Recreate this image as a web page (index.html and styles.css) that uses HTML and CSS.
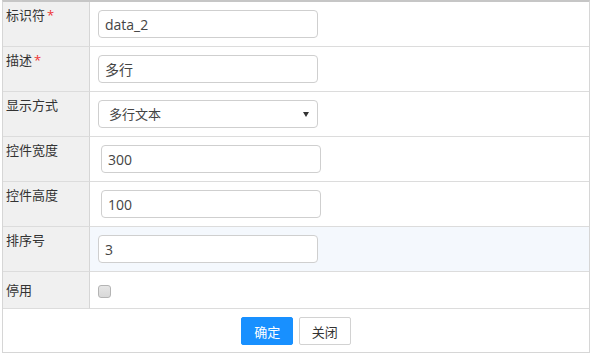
FILE: index.html
```html
<!DOCTYPE html>
<html lang="zh-CN">

<head>
    <meta charset="UTF-8">
    <meta name="viewport" content="width=device-width, initial-scale=1.0">
    <title>字段属性</title>

    <link rel="stylesheet" href="styles.css">
</head>

<body>

    <form class="field-form">
        <table class="prop-table">
            <tr>
                <td class="label">标识符<span class="req">*</span></td>
                <td class="value"><input class="txt" type="text" value="data_2"></td>
            </tr>
            <tr>
                <td class="label">描述<span class="req">*</span></td>
                <td class="value"><input class="txt" type="text" value="多行"></td>
            </tr>
            <tr>
                <td class="label">显示方式</td>
                <td class="value">
                    <span class="select-wrap">
                        <select class="txt sel">
                            <option>多行文本</option>
                            <option>单行文本</option>
                        </select>
                    </span>
                </td>
            </tr>
            <tr>
                <td class="label">控件宽度</td>
                <td class="value shifted"><input class="txt" type="text" value="300"></td>
            </tr>
            <tr>
                <td class="label">控件高度</td>
                <td class="value shifted"><input class="txt" type="text" value="100"></td>
            </tr>
            <tr class="hover">
                <td class="label">排序号</td>
                <td class="value"><input class="txt" type="text" value="3"></td>
            </tr>
            <tr class="short">
                <td class="label">停用</td>
                <td class="value"><input class="chk" type="checkbox"></td>
            </tr>
            <tr>
                <td class="actions" colspan="2">
                    <button type="button" class="btn btn-primary">确定</button>
                    <button type="button" class="btn">关闭</button>
                </td>
            </tr>
        </table>
    </form>

</body>

</html>
```

FILE: styles.css
```css
* {
    font-family: 'Open Sans', 'Noto Sans CJK SC', sans-serif;
    box-sizing: border-box;
}

html,
body {
    margin: 0;
    padding: 0;
    background: #fff;
    color: #333;
    font-size: 13px;
}

.field-form {
    margin: 0 0 0 2px;
    width: 588px;
}

.prop-table {
    width: 100%;
    border-spacing: 0;
    border-top: 2px solid #c6c6c6;
    border-left: 1px solid #d6d6d6;
    border-right: 1px solid #d6d6d6;
    border-bottom: 1px solid #d6d6d6;
}

.prop-table td {
    border-bottom: 1px solid #dcdcdc;
    padding: 0;
}

.prop-table tr:last-child td {
    border-bottom: none;
}

td.label {
    width: 87px;
    background: #f0f0f0;
    border-right: 1px solid #d6d6d6;
    vertical-align: top;
    padding: 4px 0 0 3px;
    line-height: 18px;
    white-space: nowrap;
}

.req {
    color: #e33;
    margin-left: 2px;
}

td.value {
    height: 45px;
    padding: 8px 0 8px 8px;
    vertical-align: top;
}

td.shifted {
    padding-left: 11px;
}

tr.hover td.value {
    background: #f4f8fd;
}

tr.short td.value {
    height: 37px;
    padding-top: 13px;
}

tr.short td.label {
    vertical-align: middle;
    padding-top: 0;
}

.txt {
    display: block;
    width: 220px;
    height: 28px;
    border: 1px solid #cfcfcf;
    border-radius: 4px;
    padding: 0 6px;
    font-size: 14px;
    color: #444;
    background: #fff;
    outline: none;
}

.select-wrap {
    position: relative;
    display: block;
    width: 220px;
}

.sel {
    appearance: none;
    -webkit-appearance: none;
    padding-left: 10px;
    font-size: 13px;
}

.select-wrap::after {
    content: '';
    position: absolute;
    right: 9px;
    top: 12px;
    border-left: 3px solid transparent;
    border-right: 3px solid transparent;
    border-top: 5px solid #333;
}

.chk {
    appearance: none;
    -webkit-appearance: none;
    display: block;
    margin: 0;
    width: 13px;
    height: 13px;
    border: 1px solid #b4b4b4;
    border-radius: 3px;
    background: linear-gradient(#e6e6e6, #d8d8d8);
}

td.actions {
    height: 43px;
    text-align: center;
    vertical-align: top;
    padding-top: 8px;
}

.btn {
    width: 52px;
    height: 28px;
    margin: 0 1px;
    padding: 0;
    border: 1px solid #d2d2d2;
    border-radius: 2px;
    background: #fff;
    color: #333;
    font-size: 13px;
}

.btn-primary {
    background: #1890ff;
    border-color: #1890ff;
    color: #fff;
}
```
